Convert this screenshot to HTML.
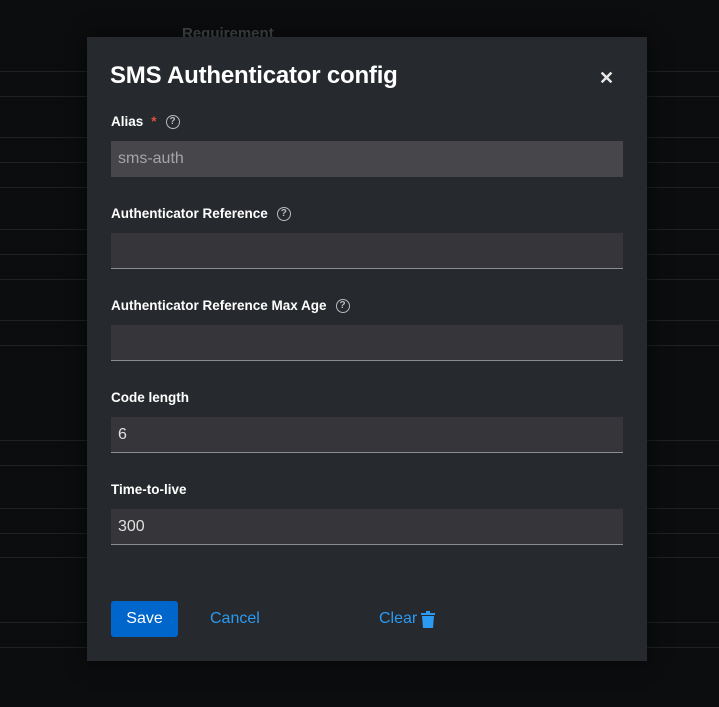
<!DOCTYPE html>
<html><head><style>
*{margin:0;padding:0;box-sizing:border-box}
body{width:719px;height:707px;background:#0c0d0e;position:relative;overflow:hidden;font-family:"Liberation Sans",sans-serif}
.l{position:absolute;left:0;width:719px;height:1px;background:#1f2123}
.req{position:absolute;left:182px;top:25px;color:#44474a;font-size:15px;font-weight:bold}
.modal{position:absolute;left:87px;top:37px;width:560px;height:624px;background:#26292d;box-shadow:0 0 20px rgba(0,0,0,.6)}
h1{position:absolute;left:23px;top:25px;color:#fff;font-size:24px;font-weight:bold;letter-spacing:-0.2px}
.x{position:absolute;left:512px;top:31px;color:#e8e8e8;font-size:18px;font-weight:bold}
.lab{position:absolute;left:24px;color:#fff;font-size:13.5px;font-weight:bold;display:flex;align-items:center}
.q{display:inline-block;width:14px;height:14px;border:1.5px solid #b8bbbe;border-radius:50%;color:#b8bbbe;font-size:10px;text-align:center;line-height:11px;margin-left:9px;font-weight:bold}
.star{color:#e0513d;margin-left:8px}
.in{position:absolute;left:24px;width:512px;height:36px;background:#36363a;border-bottom:1px solid #8a8d90;color:#e0e0e0;font-size:16px;padding:9px 7px}
.save{position:absolute;left:24px;top:564px;width:67px;height:36px;background:#0066cc;border-radius:3px;color:#fff;font-size:16px;text-align:center;line-height:36px}
.lnk{position:absolute;top:573px;color:#2b9af3;font-size:16px}
</style></head><body>
<div class="req">Requirement</div>
<div class="l" style="top:71px"></div><div class="l" style="top:96px"></div><div class="l" style="top:137px"></div><div class="l" style="top:162px"></div><div class="l" style="top:187px"></div><div class="l" style="top:229px"></div><div class="l" style="top:254px"></div><div class="l" style="top:279px"></div><div class="l" style="top:320px"></div><div class="l" style="top:345px"></div><div class="l" style="top:440px"></div><div class="l" style="top:465px"></div><div class="l" style="top:508px"></div><div class="l" style="top:533px"></div><div class="l" style="top:557px"></div><div class="l" style="top:622px"></div><div class="l" style="top:647px"></div>
<div class="modal">
<h1>SMS Authenticator config</h1>
<div class="x">✕</div>
<div class="lab" style="top:77px">Alias<span class="star">*</span><span class="q">?</span></div>
<div class="in" style="top:104px;background:#47464b;border:none;color:#a5a5a8">sms-auth</div>
<div class="lab" style="top:169px">Authenticator Reference<span class="q">?</span></div>
<div class="in" style="top:196px"></div>
<div class="lab" style="top:261px">Authenticator Reference Max Age<span class="q">?</span></div>
<div class="in" style="top:288px"></div>
<div class="lab" style="top:353px">Code length</div>
<div class="in" style="top:380px">6</div>
<div class="lab" style="top:445px">Time-to-live</div>
<div class="in" style="top:472px">300</div>
<div class="save">Save</div>
<div class="lnk" style="left:123px">Cancel</div>
<div class="lnk" style="left:292px;display:flex;align-items:center">Clear<svg width="14" height="17" viewBox="0 0 14 17" style="margin-left:4px"><rect x="0" y="2" width="14" height="2" fill="#2b9af3"/><rect x="5" y="0" width="4" height="3" fill="#2b9af3"/><path d="M1 5h12l-1 12H2z" fill="#2b9af3"/></svg></div>
</div>
</body></html>
